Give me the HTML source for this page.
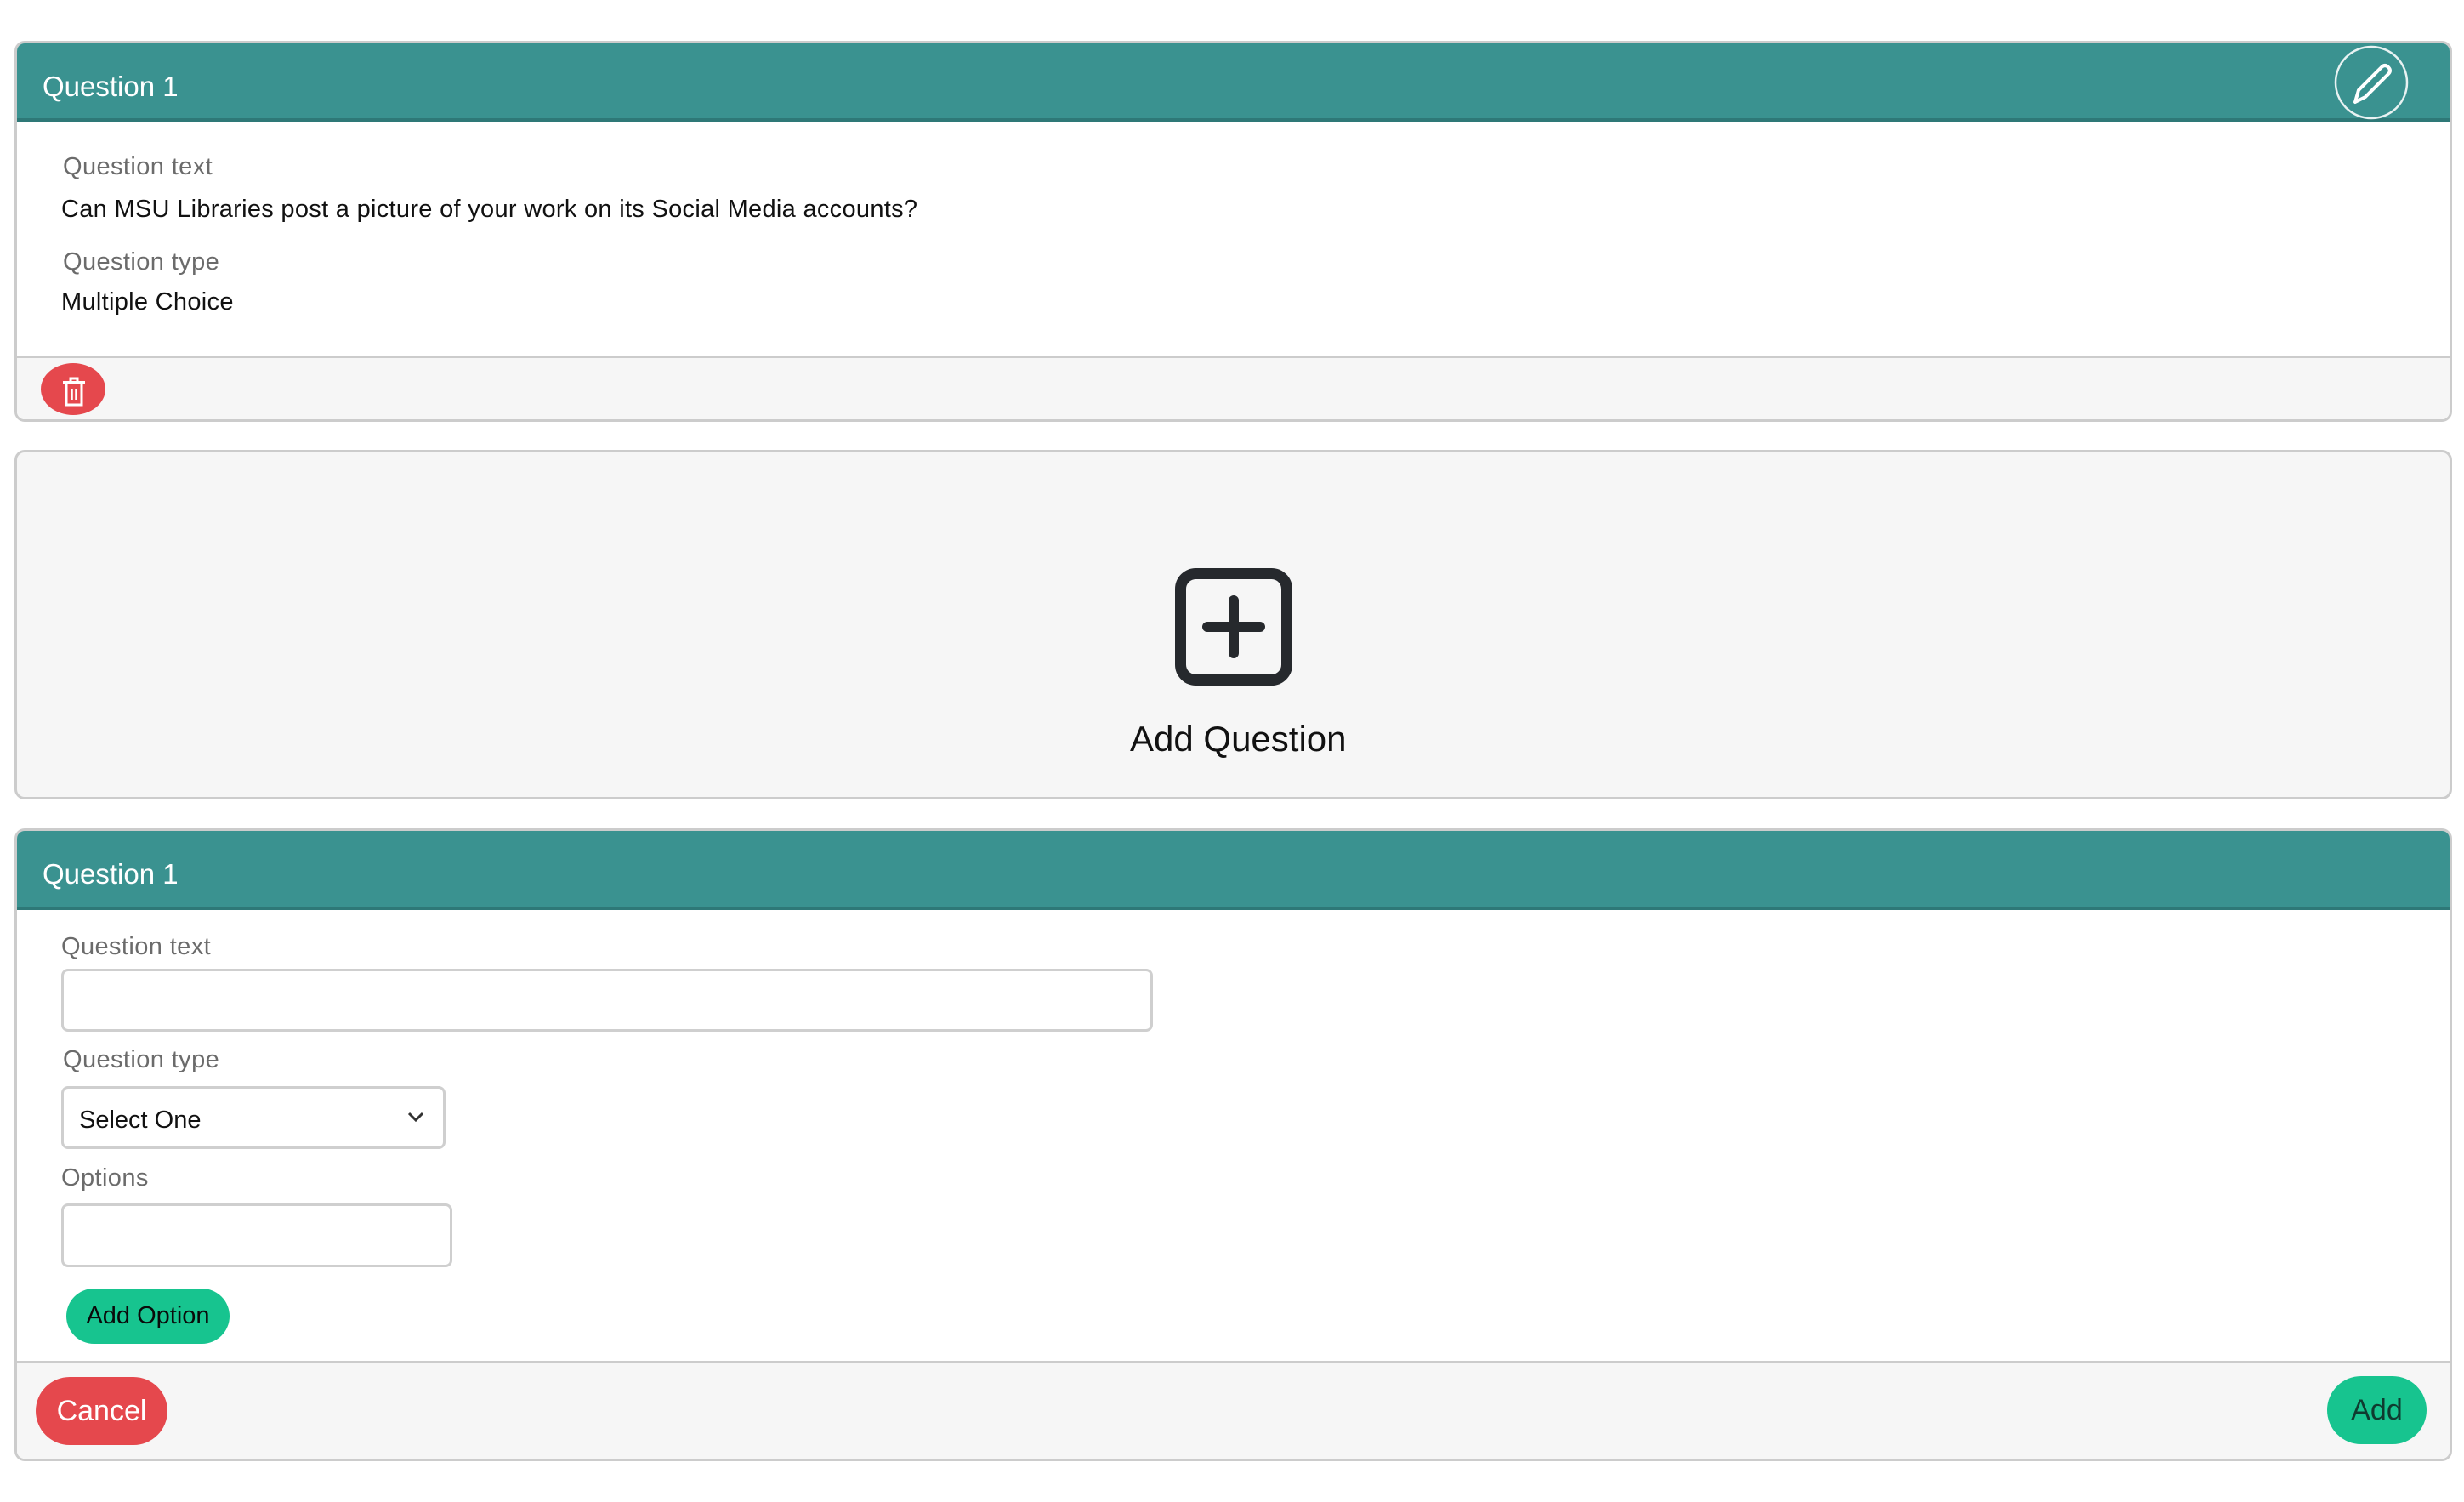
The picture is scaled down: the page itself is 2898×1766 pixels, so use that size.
<!DOCTYPE html>
<html><head><meta charset="utf-8"><style>
*{margin:0;padding:0;box-sizing:border-box}
body{width:2898px;height:1766px;background:#fff;font-family:"Liberation Sans",sans-serif;position:relative;overflow:hidden}
.a{position:absolute}
.card{position:absolute;left:17px;width:2867px;border:3px solid #cccccc;border-radius:12px;overflow:hidden;background:#fff}
.hd{position:absolute;left:0;right:0;top:0;background:#3a9290;border-bottom:4px solid #2e7877}
.ht{position:absolute;left:30px;color:#fff;font-size:33px;line-height:33px}
.lbl{color:#6b6b6b;font-size:29px;line-height:28px;white-space:nowrap;letter-spacing:0.4px}
.val{color:#111;font-size:29px;line-height:28px;white-space:nowrap;letter-spacing:0.3px}
.inp{border:3px solid #cfcfcf;border-radius:8px;background:#fff}
.pill{border-radius:40px;text-align:center;white-space:nowrap}
</style></head><body>

<!-- Card 1 -->
<div class="card" style="top:48px;height:448px;">
  <div class="hd" style="height:92px;"><div class="ht" style="top:34px;">Question 1</div></div>
  <div class="a" style="left:0;right:0;top:367px;bottom:0;background:#f6f6f6;border-top:3px solid #cccccc"></div>
</div>
<svg class="a" style="left:2744px;top:52px" width="90" height="90" viewBox="0 0 90 90">
  <circle cx="45" cy="45" r="42" fill="none" stroke="#e8f2f2" stroke-width="2.5"/>
  <path d="M26 68 L30 54 L57 27 Q61 23 65 27 Q69 31 65 35 L38 62 Z" fill="none" stroke="#fff" stroke-width="4" stroke-linejoin="round"/>
</svg>
<div class="a lbl" style="left:74px;top:182px;">Question text</div>
<div class="a val" style="left:72px;top:232px;">Can MSU Libraries post a picture of your work on its Social Media accounts?</div>
<div class="a lbl" style="left:74px;top:294px;">Question type</div>
<div class="a val" style="left:72px;top:341px;">Multiple Choice</div>
<div class="a" style="left:48px;top:427px;width:76px;height:61px;border-radius:50%;background:#e5484d;"></div>
<svg class="a" style="left:71px;top:443px" width="32" height="36" viewBox="0 0 32 36">
  <path d="M12 5 V2 H20 V5" fill="none" stroke="#fff" stroke-width="3"/>
  <path d="M3 6.5 H29" stroke="#fff" stroke-width="3"/>
  <path d="M7 8 V33 H25 V8" fill="none" stroke="#fff" stroke-width="3"/>
  <path d="M13.5 14 V27 M18.5 14 V27" stroke="#fff" stroke-width="2.5"/>
</svg>

<!-- Card 2 -->
<div class="card" style="top:529px;height:411px;background:#f6f6f6;"></div>
<svg class="a" style="left:1380px;top:666px" width="142" height="142" viewBox="0 0 142 142">
  <rect x="8.5" y="8.5" width="125" height="125" rx="18" fill="none" stroke="#26292d" stroke-width="13"/>
  <path d="M71 40 V102 M40 71 H102" stroke="#26292d" stroke-width="12" stroke-linecap="round"/>
</svg>
<div class="a" style="left:1329px;top:846px;font-size:42px;line-height:46px;color:#111;white-space:nowrap">Add Question</div>

<!-- Card 3 -->
<div class="card" style="top:974px;height:744px;">
  <div class="hd" style="height:93px;"><div class="ht" style="top:34px;">Question 1</div></div>
  <div class="a" style="left:0;right:0;top:623px;bottom:0;background:#f6f6f6;border-top:3px solid #cccccc"></div>
</div>
<div class="a lbl" style="left:72px;top:1099px;">Question text</div>
<div class="a inp" style="left:72px;top:1139px;width:1284px;height:74px;"></div>
<div class="a lbl" style="left:74px;top:1232px;">Question type</div>
<div class="a inp" style="left:72px;top:1277px;width:452px;height:74px;"></div>
<div class="a val" style="left:93px;top:1302px;font-size:29px;line-height:30px;letter-spacing:0">Select One</div>
<svg class="a" style="left:478px;top:1306px" width="22" height="14" viewBox="0 0 22 14"><path d="M3 3 L11 11 L19 3" fill="none" stroke="#333" stroke-width="3"/></svg>
<div class="a lbl" style="left:72px;top:1371px;">Options</div>
<div class="a inp" style="left:72px;top:1415px;width:460px;height:75px;"></div>
<div class="a pill" style="left:78px;top:1515px;width:192px;height:65px;background:#17c48f;color:#0a0a0a;font-size:29px;line-height:65px;">Add Option</div>
<div class="a pill" style="left:42px;top:1619px;width:155px;height:80px;background:#e5484d;color:#fff;font-size:34px;line-height:80px;">Cancel</div>
<div class="a pill" style="left:2737px;top:1618px;width:117px;height:80px;background:#17c48f;color:#0f3b30;font-size:34px;line-height:80px;">Add</div>
</body></html>
